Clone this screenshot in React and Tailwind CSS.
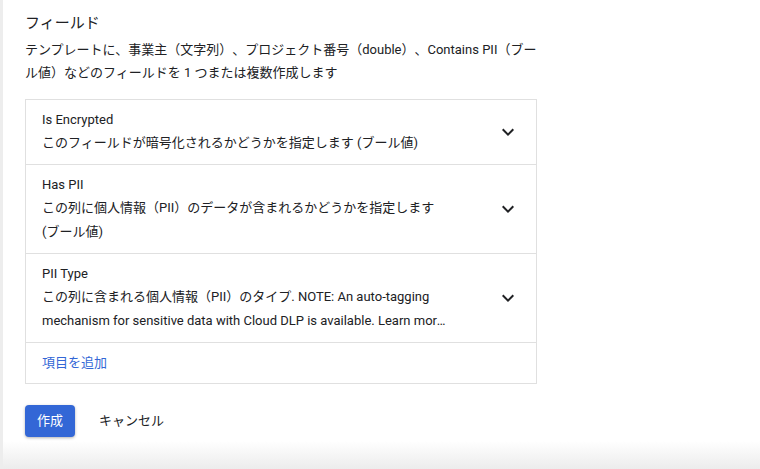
import { useState } from 'react';

const FIELDS = [
  {
    name: 'Is Encrypted',
    desc: 'このフィールドが暗号化されるかどうかを指定します (ブール値)',
  },
  {
    name: 'Has PII',
    desc: 'この列に個人情報（PII）のデータが含まれるかどうかを指定します (ブール値)',
  },
  {
    name: 'PII Type',
    desc: 'この列に含まれる個人情報（PII）のタイプ. NOTE: An auto-tagging mechanism for sensitive data with Cloud DLP is available. Learn more about how to use it.',
    clamp: true,
  },
];

function ExpandMore() {
  return (
    <svg viewBox="0 0 24 24" className="h-6 w-6 fill-[#202124]">
      <path d="M16.59 8.59L12 13.17 7.41 8.59 6 10l6 6 6-6z" />
    </svg>
  );
}

function FieldRow({ field }) {
  return (
    <div className="flex items-center border-b border-[#e0e0e0] py-[9px] pl-4 pr-4">
      <div className="w-[404px] shrink-0">
        <p className="text-[13px] leading-[22px] text-[#202124]">{field.name}</p>
        <p className={`text-[13px] leading-[24px] text-[#202124] ${field.clamp ? 'line-clamp-2' : ''}`}>
          {field.desc}
        </p>
      </div>
      <div className="flex flex-1 justify-end pr-0">
        <ExpandMore />
      </div>
    </div>
  );
}

export default function App() {
  const [fields] = useState(FIELDS);

  return (
    <div
      className="flex min-h-[469px] w-[760px] flex-col overflow-hidden border-l-[3px] border-[#ededed] bg-white text-[#202124] [text-spacing-trim:space-all]"
      style={{ fontFamily: 'Roboto, "Noto Sans CJK JP", sans-serif' }}
    >
      <div className="flex-1 pl-[22px] pt-[12px]">
        <h2 className="text-[15px] leading-[22px] text-[#202124]">フィールド</h2>
        <p className="mt-[4px] w-[512px] text-[13px] leading-[23px] text-[#202124]">
          テンプレートに、事業主（文字列）、プロジェクト番号（double）、Contains PII（ブール値）などのフィールドを 1 つまたは複数作成します
        </p>

        <div className="mt-[15px] w-[512px] border border-b-0 border-[#e0e0e0]">
          {fields.map((field) => (
            <FieldRow key={field.name} field={field} />
          ))}
          <div className="flex h-[41px] items-center border-b border-[#e0e0e0] px-4">
            <span className="text-[13px] text-[#3367d6]">項目を追加</span>
          </div>
        </div>

        <div className="mt-[21px] flex items-center gap-[8px]">
          <button className="h-[32px] w-[50px] rounded-[4px] bg-[#3367d6] text-[13px] text-white shadow-[0_1px_3px_rgba(0,0,0,0.3)]">
            作成
          </button>
          <button className="h-[32px] px-4 text-[13px] text-[#202124]">キャンセル</button>
        </div>
      </div>

      <div className="h-[28px] bg-gradient-to-b from-white to-[#ececec]" />
    </div>
  );
}
